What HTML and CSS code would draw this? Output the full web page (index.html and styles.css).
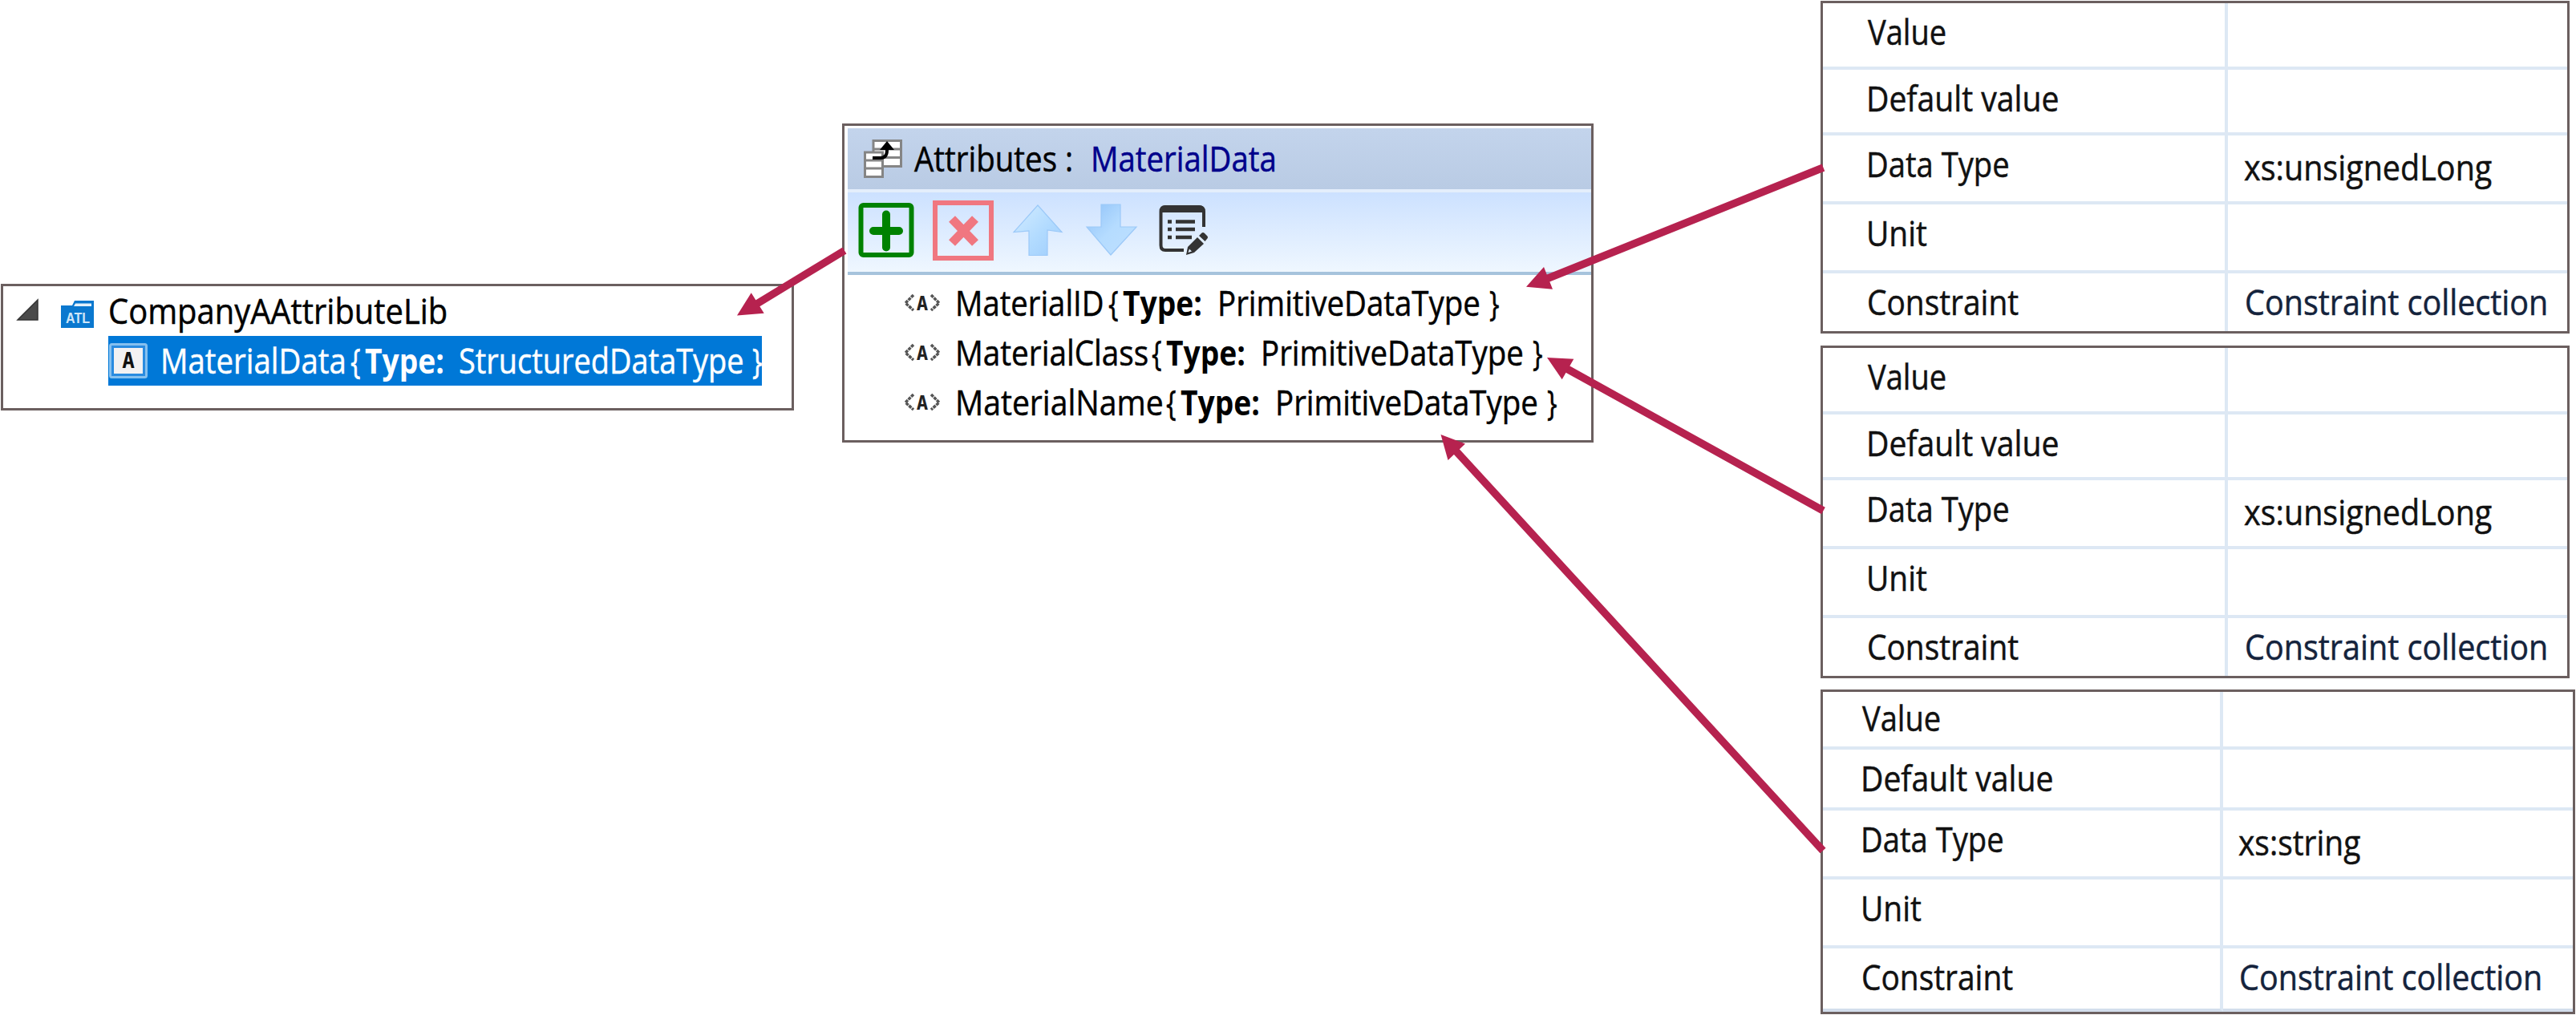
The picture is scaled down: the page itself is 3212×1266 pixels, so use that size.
FILE: index.html
```
<!DOCTYPE html>
<html lang="en">
<head>
<meta charset="utf-8">
<title>Attribute library</title>
<link rel="stylesheet" href="styles.css">
</head>
<body>
<main class="diagram">

  <section class="panel tree">
    <div class="tree-row">
      <svg class="expander" width="28" height="28" viewBox="0 0 28 28"><path d="M2 27H27V2Z" fill="#4a4a4a" stroke="#333" stroke-width="1.5"/></svg>
      <svg class="lib-icon" width="42" height="36" viewBox="0 0 42 36">
        <path d="M0 7H14L17 1H41V35H0Z" fill="#0a78cf"/>
        <path d="M18 4.500H38V8H16Z" fill="#e4f1fb"/>
        <text x="21" y="29" text-anchor="middle" textLength="30" lengthAdjust="spacingAndGlyphs" class="lib-text">ATL</text>
      </svg>
      <span class="t k-company">CompanyAAttributeLib</span>
    </div>
    <div class="tree-row selected">
      <svg class="type-icon" width="50" height="46" viewBox="0 0 50 46">
        <rect x="2.500" y="2.500" width="45" height="41" rx="2" fill="#2a8be0" stroke="#86c0ef" stroke-width="3"/>
        <rect x="7" y="7" width="36" height="32" fill="#f3f1f2"/>
        <text x="25" y="32" text-anchor="middle" class="type-text">A</text>
      </svg>
      <span class="t w-tree k-mdata">MaterialData</span><span class="t w-brace k-brace">{</span><b class="t w-type k-type">Type:</b><span class="t w-struct k-struct">StructuredDataType</span><span class="t k-brace">}</span>
    </div>
  </section>

  <section class="panel attributes">
    <header class="attr-head">
      <svg width="50" height="50" viewBox="0 0 50 50">
        <g fill="#fff" stroke="#858585" stroke-width="3">
          <path d="M13 2.500H47.500V34.500H13Z"/><path d="M13 13H47.500M13 23.500H47.500"/>
          <path d="M2.500 17H24.500V47.500H2.500Z"/><path d="M2.500 27H24.500M2.500 37H24.500"/>
        </g>
        <path d="M12 24H22Q30 24 30 14V10" fill="none" stroke="#000" stroke-width="4"/>
        <path d="M30 3L39 14H21Z" fill="#000"/>
      </svg>
      <span class="t w-attr k-attr">Attributes :</span><span class="t k-mdata navy">MaterialData</span>
    </header>
    <div class="toolbar">
      <svg width="70" height="70" viewBox="0 0 70 70">
        <rect x="3.500" y="4" width="63" height="62" rx="3" fill="none" stroke="#008200" stroke-width="6"/>
        <path d="M35 15.500V56.500M19 36H51" stroke="#008200" stroke-width="10" stroke-linecap="round"/>
      </svg>
      <svg class="ic-del" width="76" height="76" viewBox="0 0 76 76">
        <rect x="3" y="4" width="70" height="69" fill="none" stroke="#f07780" stroke-width="6"/>
        <path d="M24 24L53 54M53 24L24 54" stroke="#f07780" stroke-width="11"/>
      </svg>
      <svg class="ic-up" width="64" height="66" viewBox="0 0 64 66">
        <defs><linearGradient id="up" x1="0" y1="0" x2="1" y2="1"><stop offset="0" stop-color="#d3ecff"/><stop offset=".55" stop-color="#b2dbff"/><stop offset="1" stop-color="#9fcdfc"/></linearGradient></defs>
        <path d="M32 2L62 35.500L44 33V64.500H21V34L2 35.500Z" fill="url(#up)" stroke="#9cc9f8" stroke-width="1.200"/>
      </svg>
      <svg class="ic-down" width="66" height="66" viewBox="0 0 66 66">
        <defs><linearGradient id="dn" x1="0" y1="0" x2="1" y2="1"><stop offset="0" stop-color="#8fc1f8"/><stop offset=".5" stop-color="#b5dcff"/><stop offset="1" stop-color="#bfe0ff"/></linearGradient></defs>
        <path d="M20 1H44V29H64L32 64L2 29H20Z" fill="url(#dn)" stroke="#9cc9f8" stroke-width="1.200"/>
      </svg>
      <svg class="ic-edit" width="64" height="66" viewBox="0 0 64 66">
        <path d="M32 58H9Q3.500 58 3.500 52V10Q3.500 4 9 4H51Q57 4 57 10V29" fill="none" stroke="#333" stroke-width="4"/>
        <path d="M3 11V9Q3 2 10 2H50Q58 2 58 9V11Z" fill="#333"/>
        <path d="M22 22.500H46M22 32H46M22 42H42" stroke="#333" stroke-width="4.500"/>
        <path d="M12 22.500H17M12 32H17M12 42H17" stroke="#333" stroke-width="4.500"/>
        <path d="M35 64L37 54L49 42L57 50L45 61Z" fill="#333"/>
        <path d="M51 40L54 37Q56 35 58 37L61 40Q63 42 61 44L58.500 47Z" fill="#333"/>
        <path d="M37.500 61L39 56.500L42 59.500Z" fill="#e4f0fd"/>
      </svg>
    </div>
    <div class="attr-list">
      <div class="attr-row">
        <svg width="46" height="34" viewBox="0 -4 46 34"><path d="M12 3L2 13L12 22M34 3L44 13L34 22" class="chev"/><text x="23" y="22" text-anchor="middle" class="a-text">A</text></svg>
        <span class="t w-id k-id">MaterialID</span><span class="t w-brace k-brace">{</span><b class="t w-type k-type">Type:</b><span class="t w-prim k-prim">PrimitiveDataType</span><span class="t k-brace">}</span>
      </div>
      <div class="attr-row">
        <svg width="46" height="34" viewBox="0 -4 46 34"><path d="M12 3L2 13L12 22M34 3L44 13L34 22" class="chev"/><text x="23" y="22" text-anchor="middle" class="a-text">A</text></svg>
        <span class="t w-class k-class">MaterialClass</span><span class="t w-brace k-brace">{</span><b class="t w-type k-type">Type:</b><span class="t w-prim k-prim">PrimitiveDataType</span><span class="t k-brace">}</span>
      </div>
      <div class="attr-row">
        <svg width="46" height="34" viewBox="0 -4 46 34"><path d="M12 3L2 13L12 22M34 3L44 13L34 22" class="chev"/><text x="23" y="22" text-anchor="middle" class="a-text">A</text></svg>
        <span class="t w-name k-name">MaterialName</span><span class="t w-brace k-brace">{</span><b class="t w-type k-type">Type:</b><span class="t w-prim k-prim">PrimitiveDataType</span><span class="t k-brace">}</span>
      </div>
    </div>
  </section>

  <div class="details">
    <section class="panel props">
      <div class="label"><span class="t k-value">Value</span></div><div class="val"></div>
      <div class="label"><span class="t k-default">Default value</span></div><div class="val"></div>
      <div class="label"><span class="t k-dtype">Data Type</span></div><div class="val typed"><span class="t k-ulong">xs:unsignedLong</span></div>
      <div class="label"><span class="t k-unit">Unit</span></div><div class="val"></div>
      <div class="label"><span class="t k-constraint">Constraint</span></div><div class="val"><span class="t k-coll slate">Constraint collection</span></div>
    </section>
    <section class="panel props">
      <div class="label"><span class="t k-value">Value</span></div><div class="val"></div>
      <div class="label"><span class="t k-default">Default value</span></div><div class="val"></div>
      <div class="label"><span class="t k-dtype">Data Type</span></div><div class="val typed"><span class="t k-ulong">xs:unsignedLong</span></div>
      <div class="label"><span class="t k-unit">Unit</span></div><div class="val"></div>
      <div class="label"><span class="t k-constraint">Constraint</span></div><div class="val"><span class="t k-coll slate">Constraint collection</span></div>
    </section>
    <section class="panel props compact">
      <div class="label first"><span class="t k-value">Value</span></div><div class="val"></div>
      <div class="label"><span class="t k-default">Default value</span></div><div class="val"></div>
      <div class="label"><span class="t k-dtype">Data Type</span></div><div class="val typed"><span class="t k-string">xs:string</span></div>
      <div class="label"><span class="t k-unit">Unit</span></div><div class="val"></div>
      <div class="label"><span class="t k-constraint">Constraint</span></div><div class="val"><span class="t k-coll slate">Constraint collection</span></div>
    </section>
  </div>

  <svg class="arrows" width="3212" height="1266" viewBox="0 0 3212 1266">
    <path class="shaft" d="M1053 312.500L942 380M2273.500 209L1928 348M2273.500 637L1952 459M2273 1061L1814 561"/>
    <path class="head" d="M919 393.500L936.700 365.300L952.700 390.700ZM1903 357.700L1925 333L1936 360.700ZM1929 446L1962.300 447.700L1947.700 473.300ZM1796.500 542L1827 553.500L1805.500 574Z"/>
  </svg>
</main>
</body>
</html>
```
FILE: styles.css
```
body {
  margin: 0;
  background: #fff;
  font-family: "Open Sans", "Noto Sans", sans-serif;
  font-size: 43px;
  color: #000;
}

.diagram {
  position: relative;
  display: flex;
  align-items: flex-start;
  width: 3212px;
  height: 1266px;
  overflow: hidden;
}

.panel {
  box-sizing: border-box;
  flex: none;
  border: 3px solid #6b5f5f;
  background: #fff;
}

svg { display: block; flex: none; }

/* Condensed text: each run has its own horizontal scale */
.t {
  display: block;
  flex: none;
  white-space: nowrap;
  transform: scaleX(var(--k, .9));
  transform-origin: 0 50%;
  -webkit-text-stroke: .5px currentColor;
}
b.t { -webkit-text-stroke: 0; }
.k-company { --k: .928; }
.k-mdata { --k: .893; }
.k-struct { --k: .882; }
.k-attr { --k: .895; }
.k-id { --k: .89; }
.k-class { --k: .9; }
.k-name { --k: .91; }
.k-type { --k: .865; }
.k-prim { --k: .894; }
.k-brace { --k: .78; }
.k-value { --k: .885; margin-left: 2px; }
.k-default { --k: .91; }
.k-dtype { --k: .888; }
.k-unit { --k: .905; }
.k-constraint { --k: .904; margin-left: 1px; }
.k-ulong { --k: .919; }
.k-string { --k: .905; }
.k-coll { --k: .919; margin-left: 1px; }

.w-tree { width: 237px; }
.w-brace { width: 18px; }
.w-type { width: 118px; }
.w-struct { width: 367px; }
.w-prim { width: 339px; }
.w-attr { width: 220px; }
.w-id { width: 191px; }
.w-class { width: 245px; }
.w-name { width: 263px; }
.navy { color: #00008b; }
.slate { color: #14233c; }

/* Library tree */
.tree {
  width: 989px;
  height: 158px;
  margin: 354px 0 0 1px;
}
.tree-row {
  display: flex;
  align-items: center;
  height: 62px;
  line-height: 62px;
}
.tree-row:first-child { padding-left: 16px; }
.expander { margin-bottom: 4px; }
.lib-icon { margin: 8px 17px 0 28px; }
.lib-text { font: bold 19px "Liberation Sans", sans-serif; fill: #cfe6f8; }
.selected {
  width: 815px;
  margin-left: 131px;
  overflow: hidden;
  background: #0078d7;
  color: #fff;
}
.selected .w-tree { margin-left: 15px; }
.selected .w-type { width: 117px; }
.selected .w-struct { width: 366px; }
.type-text { font: bold 26px "DejaVu Sans Mono", monospace; fill: #111; }

/* Attribute list */
.attributes {
  width: 937px;
  height: 398px;
  margin: 154px 0 0 60px;
  padding: 3px 0 0 4px;
}
.attr-head {
  display: flex;
  align-items: center;
  height: 76px;
  padding-left: 19px;
  line-height: 70px;
  background: linear-gradient(#c3d4ec, #b9cbe4);
}
.attr-head svg { margin-right: 14px; }
.attr-head .t { margin-top: -1px; }
.toolbar {
  box-sizing: border-box;
  display: flex;
  align-items: center;
  height: 107px;
  padding: 0 0 6px 13px;
  border-top: 4px solid #e4eefb;
  border-bottom: 4px solid #a6c3dc;
  background: linear-gradient(#cce1ff, #eff7ff);
}
.ic-del { margin-left: 23px; }
.ic-up { margin-left: 23px; }
.ic-down { margin-left: 27px; }
.ic-edit { margin-left: 25px; }

.attr-list { padding-top: 4px; }
.attr-row {
  display: flex;
  align-items: center;
  height: 62px;
  padding-left: 70px;
  line-height: 62px;
}
.attr-row svg { margin: 0 18px 0 0; }
.chev { fill: none; stroke: #555; stroke-width: 3.5; stroke-dasharray: 4 1; }
.a-text { font: bold 24px "DejaVu Sans Mono", monospace; fill: #222; }

/* Property grids */
.details {
  display: flex;
  flex-direction: column;
  margin: 1px 0 0 283px;
}
.props {
  display: grid;
  grid-template-columns: 505px minmax(0, 1fr);
  grid-template-rows: 83px 82px 86px 86px 72px;
  width: 934px;
  height: 415px;
  margin-bottom: 15px;
  line-height: 71px;
  color: #111;
}
.props > div { height: 100%; box-sizing: border-box; border-bottom: 4px solid #dde8f4; }
.props > div:nth-last-child(-n+2) { border-bottom: 0; }
.props > .label {
  padding-left: 54px;
  border-right: 4px solid #dde8f4;
}
.props > .val { padding-left: 20px; }
.props > .typed { padding-top: 4px; }
.props + .compact { margin-top: -1px; }
.compact {
  grid-template-columns: 499px minmax(0, 1fr);
  grid-template-rows: 72px 76px 86px 86px 79px;
  width: 941px;
  height: 405px;
  margin-bottom: 0;
}
.compact > div:nth-last-child(-n+2) { border-bottom: 4px solid #d3deec; }
.compact > .label { padding-left: 47px; }
.compact > .first { line-height: 65px; }
.compact > .val { padding-left: 19px; }

/* Connectors */
.arrows {
  position: absolute;
  inset: 0;
  pointer-events: none;
}
.shaft { fill: none; stroke: #b6224f; stroke-width: 9.5; }
.head { fill: #b6224f; }
```
